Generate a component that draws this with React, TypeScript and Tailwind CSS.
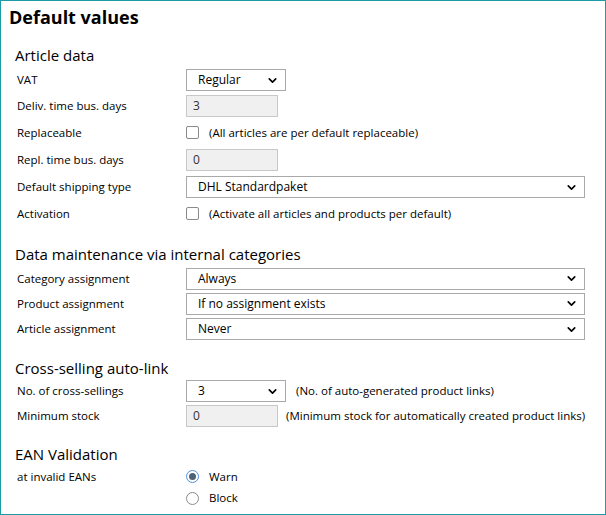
import { ChevronDown } from "lucide-react";

const font = { fontFamily: '"Open Sans", "Noto Sans", sans-serif' };

const Select = ({ value, full }: { value: string; full?: boolean }) => (
  <div className={`flex items-center justify-between h-[22px] border border-[#a9a9a9] bg-white pl-[11px] pr-[6px] text-[12px] text-black ${full ? "w-[399px]" : "w-[100px]"}`}>
    <span>{value}</span>
    <ChevronDown size={13} strokeWidth={3} />
  </div>
);

const Input = ({ value }: { value: string }) => (
  <div className="flex items-center h-[22px] w-[92px] border border-[#c8c8c8] bg-[#f0f0f0] pl-[6px] text-[12px] text-[#333]">{value}</div>
);

const Check = () => <div className="w-[13px] h-[13px] border border-[#8a8a8a] rounded-[2px] bg-white" />;

const Row = ({ label, h, children }: { label: string; h: string; children: React.ReactNode }) => (
  <div className={`flex items-center ${h}`}>
    <div className="w-[177px] shrink-0 pl-[8px] text-[11.5px] text-black">{label}</div>
    <div className="flex items-center gap-[10px] text-[11.5px] text-black">{children}</div>
  </div>
);

const Heading = ({ children, mt }: { children: string; mt: string }) => (
  <div className={`h-[24px] flex items-center pl-[6px] text-[15px] text-black ${mt}`}>{children}</div>
);

export default function App() {
  return (
    <div style={font} className="w-[606px] h-[515px] border border-[#1b9ba3] bg-white pl-[8px] overflow-hidden">
      <div className="h-[32px] flex items-center text-[18px] font-bold text-black">Default values</div>
      <Heading mt="mt-[10px]">Article data</Heading>
      <Row label="VAT" h="h-[26px]"><Select value="Regular" /></Row>
      <Row label="Deliv. time bus. days" h="h-[26px]"><Input value="3" /></Row>
      <Row label="Replaceable" h="h-[27px]"><Check /><span>(All articles are per default replaceable)</span></Row>
      <Row label="Repl. time bus. days" h="h-[28px]"><Input value="0" /></Row>
      <Row label="Default shipping type" h="h-[26px]"><Select value="DHL Standardpaket" full /></Row>
      <Row label="Activation" h="h-[27px]"><Check /><span>(Activate all articles and products per default)</span></Row>
      <Heading mt="mt-[15px]">Data maintenance via internal categories</Heading>
      <Row label="Category assignment" h="h-[25px]"><Select value="Always" full /></Row>
      <Row label="Product assignment" h="h-[25px]"><Select value="If no assignment exists" full /></Row>
      <Row label="Article assignment" h="h-[26px]"><Select value="Never" full /></Row>
      <Heading mt="mt-[14px]">Cross-selling auto-link</Heading>
      <Row label="No. of cross-sellings" h="h-[22px]"><Select value="3" /><span>(No. of auto-generated product links)</span></Row>
      <Row label="Minimum stock" h="h-[28px]"><Input value="0" /><span className="-ml-[2px]">(Minimum stock for automatically created product links)</span></Row>
      <Heading mt="mt-[12px]">EAN Validation</Heading>
      <Row label="at invalid EANs" h="h-[21px]">
        <div className="w-[13px] h-[13px] rounded-full border border-[#4a90d9] bg-white flex items-center justify-center"><div className="w-[7px] h-[7px] rounded-full bg-[#4d6373]" /></div>
        <span>Warn</span>
      </Row>
      <Row label="" h="h-[22px]">
        <div className="w-[13px] h-[13px] rounded-full border border-[#8a8a8a] bg-white" />
        <span>Block</span>
      </Row>
    </div>
  );
}
